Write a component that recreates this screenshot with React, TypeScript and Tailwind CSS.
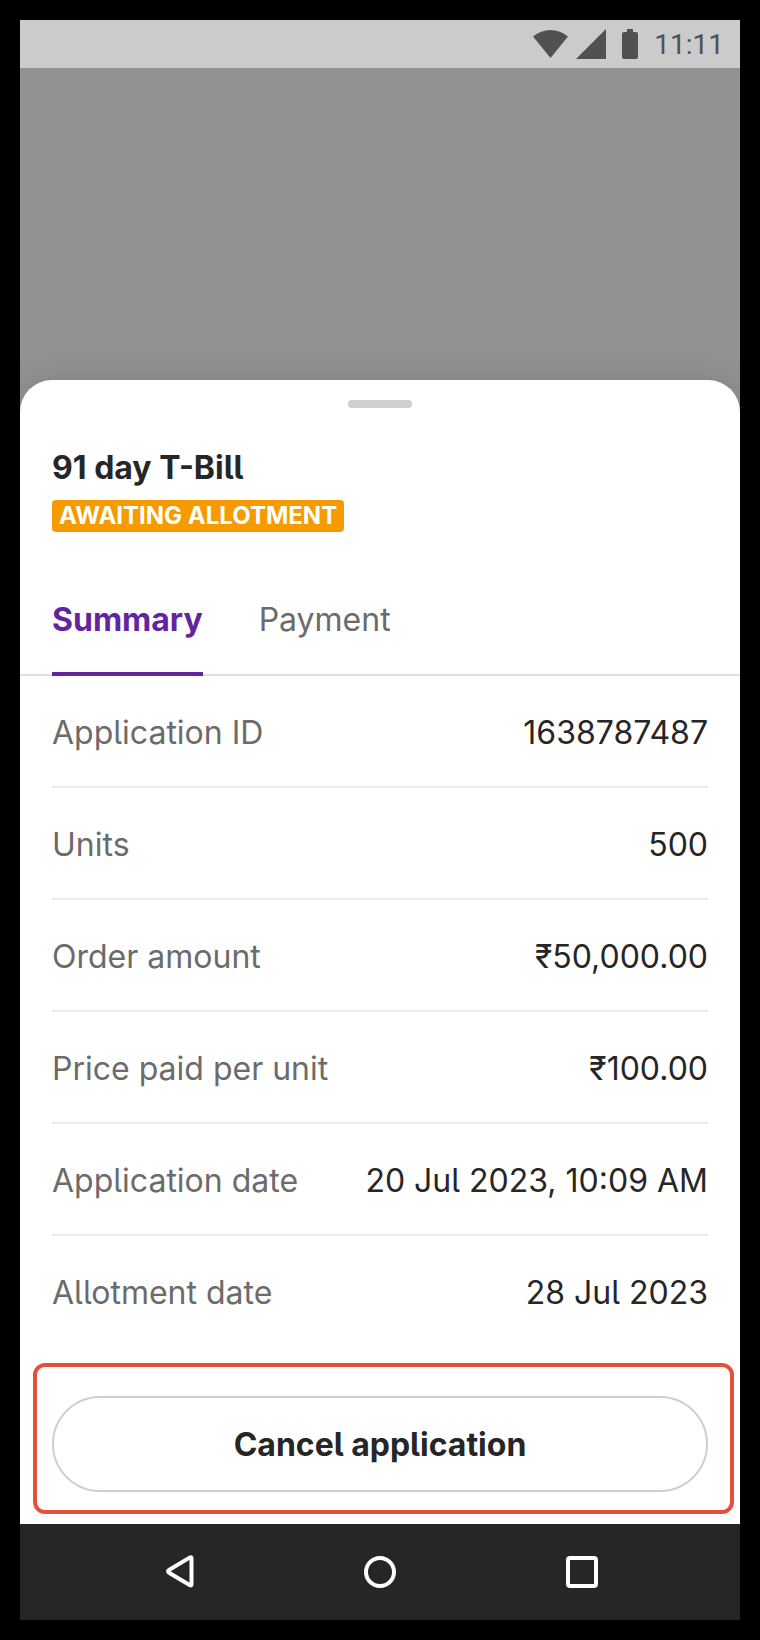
import { useState } from "react";

const rows = [
  { label: "Application ID", value: "1638787487" },
  { label: "Units", value: "500" },
  { label: "Order amount", value: "₹50,000.00" },
  { label: "Price paid per unit", value: "₹100.00" },
  { label: "Application date", value: "20 Jul 2023, 10:09 AM" },
  { label: "Allotment date", value: "28 Jul 2023" },
];

const tabs = ["Summary", "Payment"];

function StatusBar() {
  return (
    <div className="flex h-12 shrink-0 items-center justify-end bg-[#cbcbcb] pr-4 text-[#515151]">
      <svg className="mr-2 h-[30px] w-[35px]" viewBox="0 0 35 30" fill="currentColor">
        <path d="M0 7.5C10 -1.200 25 -1.200 35 7.500L17.500 29Z" />
      </svg>
      <svg className="mr-4 size-[30px]" viewBox="0 0 30 30" fill="currentColor">
        <path d="M30 0V30H0Z" />
      </svg>
      <svg className="mr-4 h-[30px] w-4" viewBox="0 0 16 30" fill="currentColor">
        <path d="M5 0H11V3H14Q16 3 16 5V28Q16 30 14 30H2Q0 30 0 28V5Q0 3 2 3H5Z" />
      </svg>
      <span className="pt-0.5 font-['Roboto',sans-serif] text-[28px] leading-8">11:11</span>
    </div>
  );
}

function NavBar() {
  return (
    <nav className="flex h-24 shrink-0 items-center justify-center gap-[161px] bg-[#262626] text-white">
      <button aria-label="Back">
        <svg className="size-10" viewBox="0 0 40 40" fill="none" stroke="currentColor" strokeWidth="4" strokeLinejoin="round">
          <path d="M32.500 6.300V32.200Q32.500 34 31 33.200L10 20.800Q8 19.300 10 18L31 5.400Q32.500 4.600 32.500 6.300Z" />
        </svg>
      </button>
      <button aria-label="Home">
        <svg className="size-10" viewBox="0 0 40 40" fill="none" stroke="currentColor" strokeWidth="4">
          <circle cx="20" cy="20" r="14" />
        </svg>
      </button>
      <button aria-label="Recent apps">
        <svg className="size-10" viewBox="0 0 40 40" fill="none" stroke="currentColor" strokeWidth="4">
          <rect x="7" y="6" width="28" height="28" rx="2" />
        </svg>
      </button>
    </nav>
  );
}

export default function App() {
  const [activeTab, setActiveTab] = useState("Summary");

  return (
    <div className="min-h-screen bg-black p-5 flex font-['Inter',sans-serif] [font-feature-settings:'cv05'] text-[32px] leading-10 text-[#262626]">
      <div className="flex min-w-0 flex-1 flex-col bg-[#929292]">
        <StatusBar />
        <div className="min-h-20 flex-1"></div>

        <section className="rounded-t-[32px] bg-white pt-5 shadow-[0_0_32px_rgba(0,0,0,0.12)] [clip-path:inset(-40px_0_0_0)]">
          <div className="mx-auto h-2 w-16 rounded-full bg-[#cfcfcf]"></div>

          <div className="flex flex-col items-start px-8 pt-10">
            <h1 className="font-bold">91 day T-Bill</h1>
            <span className="mt-3 rounded-[4px] bg-[#f59b00] px-[7px] text-2xl leading-8 font-bold text-white">AWAITING ALLOTMENT</span>
          </div>

          <div role="tablist" className="mt-9 flex gap-14 border-b-2 border-[#e0e0e0] px-8">
            {tabs.map((tab) => (
              <button
                key={tab}
                role="tab"
                aria-selected={tab === activeTab}
                onClick={() => setActiveTab(tab)}
                className={`-mb-0.5 cursor-pointer border-b-4 py-8 ${tab === activeTab ? "border-[#62259d] font-bold text-[#62259d]" : "border-transparent text-[#6b6b6b]"}`}
              >
                {tab}
              </button>
            ))}
          </div>

          <dl className="mx-8">
            {rows.map((row) => (
              <div key={row.label} className="flex h-28 items-center justify-between border-b-2 border-[#ebebeb] pt-1 last:border-transparent">
                <dt className="text-[#6b6b6b]">{row.label}</dt>
                <dd>{row.value}</dd>
              </div>
            ))}
          </dl>

          <div className="relative px-8 pt-12 pb-8">
            <button className="h-24 w-full cursor-pointer rounded-full border-2 border-[#cfcfcf] pt-0.5 font-bold">Cancel application</button>
            {/* highlight around the cancel action */}
            <div className="pointer-events-none absolute top-[15px] right-1.5 bottom-2.5 left-[13px] rounded-xl border-4 border-[#e74f3d]"></div>
          </div>
        </section>

        <NavBar />
      </div>
    </div>
  );
}
